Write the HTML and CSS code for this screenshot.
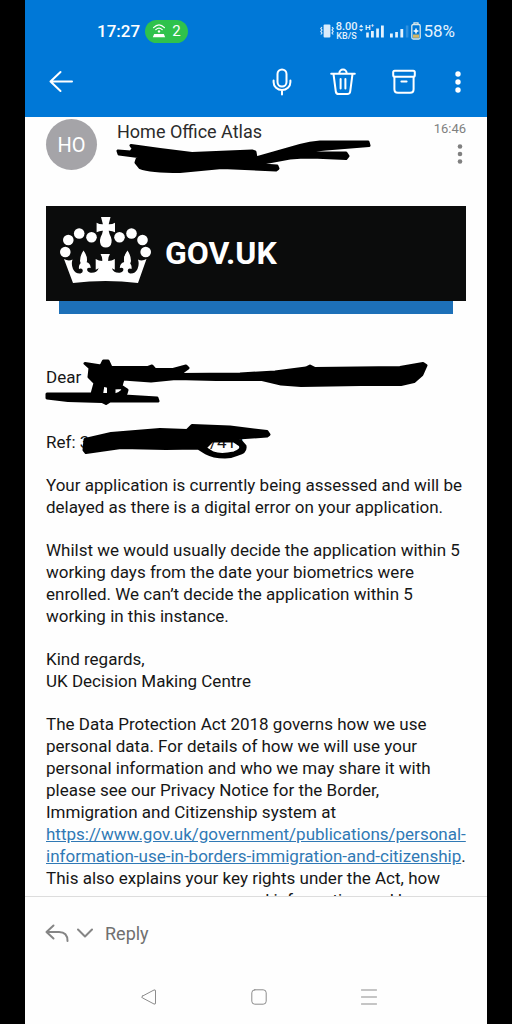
FILE: index.html
```html
<!DOCTYPE html>
<html lang="en">
<head>
<meta charset="utf-8">
<meta name="viewport" content="width=device-width, initial-scale=1">
<title>Home Office Atlas</title>
<link rel="stylesheet" href="styles.css">
</head>
<body>
<div class="screen">
  <header class="top">
    <div class="status">
      <span class="clock">17:27</span>
      <span class="hotspot">
        <svg width="14" height="16" viewBox="0 0 14 16" fill="none" stroke="#fff" stroke-width="1.3" stroke-linecap="round"><path d="M1.6 4.6Q7-.8 12.4 4.6M3.8 6.6Q7 3.6 10.2 6.6"/><circle cx="7" cy="8.4" r="1.2" fill="#fff" stroke="none"/><path d="M2.2 11h9.6l1.4 3.3H.8z" fill="#fff" stroke="none"/></svg>
        2
      </span>
      <div class="indicators">
        <svg width="14" height="16" viewBox="0 0 14 16" fill="none" stroke="#d9ebfb" stroke-width="1.2"><rect x="3.6" y="1.4" width="6.8" height="13" rx="1" fill="#d9ebfb" stroke="none"/><path d="M2 4 .8 5.5 2 7 .8 8.5 2 10 .8 11.5M12 4l1.2 1.5L12 7l1.2 1.5L12 10l1.2 1.5"/></svg>
        <span class="speed"><span class="rate">8.00</span><span class="unit">KB/S</span></span>
        <svg width="50" height="20" viewBox="0 0 50 20" fill="#e4f2fd"><path d="M0 6.2 2.2 3.4 4.4 6.2zM0 8.2h4.4L2.2 10.6z"/><text class="network" x="6" y="9">H⁺</text><path d="M7.200 11.500h2.600v5h-2.600zM12 10h2.800v6.500H12zM17.200 7.500h2.700v9h-2.700zM22 4.500h2.800v12H22zM31 12.500h2.800v4H31zM36.200 11h2.700v5.500h-2.700zM41.400 8h2.800v8.500h-2.800z"/><path d="M46.800 4.500h2.600v12h-2.600z" opacity=".2"/></svg>
        <svg width="10" height="18" viewBox="0 0 10 18" fill="none" stroke="#dbe9ea" stroke-width="1.3"><path d="M3 2.300V.8h4v1.500"/><rect x=".8" y="2.500" width="8.400" height="14.500" rx="1.500"/><path d="M2 12.500h6v3.300H2z" fill="#d6b663" stroke="none"/><path d="M5 6.500v5M2.600 9h4.800" stroke="#fff" stroke-width="1.500"/></svg>
        <span class="percent">58%</span>
      </div>
    </div>
    <nav class="toolbar" aria-label="Message actions">
      <button class="icon back" aria-label="Back"><svg width="24" height="26" viewBox="0 0 24 26"><path d="M23 12.500H1.500M11.500 3 1.500 12.500l10 9.500"/></svg></button>
      <button class="icon" aria-label="Dictate"><svg width="24" height="28" viewBox="0 0 24 28"><rect x="7.500" y="1.500" width="9" height="17" rx="4.500"/><path d="M3.600 12.500v1.700a8.400 7.800 0 0 0 16.800 0v-1.700M12 22v4.500"/></svg></button>
      <button class="icon" aria-label="Delete"><svg width="26" height="28" viewBox="0 0 26 28"><path d="M1.200 5.800h23.600M9.300 5.500a3.700 3.900 0 0 1 7.400 0M3.500 6l2.300 17.500q.3 2.500 2.800 2.500h8.800q2.500 0 2.800-2.500L22.500 6M10.600 11v9.500M15.400 11v9.500"/></svg></button>
      <button class="icon" aria-label="Archive"><svg width="24" height="28" viewBox="0 0 24 28"><rect x="1.200" y="2.700" width="21.600" height="6" rx="1.500"/><path d="M2.400 8.700v12.500q0 3.500 3.500 3.500h12.200q3.500 0 3.500-3.500V8.700M9.400 13.500h5.200"/></svg></button>
      <button class="icon more" aria-label="More options"><svg width="6" height="24" viewBox="0 0 6 24"><circle cx="3" cy="4" r="2.700"/><circle cx="3" cy="12" r="2.700"/><circle cx="3" cy="20" r="2.700"/></svg></button>
    </nav>
  </header>

  <main class="message">
    <div class="sender">
      <span class="avatar">HO</span>
      <h1 class="name">Home Office Atlas</h1>
      <div class="meta">
        <time>16:46</time>
        <button class="icon options" aria-label="Message options"><svg width="6" height="22" viewBox="0 0 6 22"><circle cx="3" cy="3.500" r="2.300"/><circle cx="3" cy="11" r="2.300"/><circle cx="3" cy="18.500" r="2.300"/></svg></button>
      </div>
    </div>

    <div class="banner">
      <svg class="crown" width="92" height="68" viewBox="0 0 92 68" fill="#fff">
        <circle cx="5.300" cy="36" r="5.300"/><circle cx="8.300" cy="24" r="5.300"/><circle cx="19.200" cy="17.500" r="5.300"/><circle cx="31.500" cy="21.200" r="5.300"/>
        <circle cx="59.500" cy="21.200" r="5.300"/><circle cx="71.500" cy="17.500" r="5.300"/><circle cx="82.500" cy="24" r="5.300"/><circle cx="85.700" cy="36" r="5.300"/>
        <path d="M41 1h9.500l-1.800 7.300q3.300.2 6.300-1.600v9.600q-3-1.800-6.300-1.600.5 3.300 2.200 6.300 1 2.500.6 5.500-.8 5-5.700 5t-5.700-5q-.4-3 .6-5.500 1.700-3 2.200-6.300-3.300-.2-6.300 1.600V6.700q3 1.800 6.300 1.600z"/>
        <path d="M4 43q4.500 2.500 8.500.5-1.500 5 .5 9.500 2.500 5 7.500 4.500 3-1 2-4-1.500-1.800-3.500-.5-.8-5 3.500-7-2.500-5 1.200-9.500 3.500 3.500 2.500 9.500 4.300 1 4.500 6-2.500-1-3.500.8-.5 3 3.500 4 6 .5 8-4.500l-3 1.500V43q3 2 6.500 2 .5-3.500-1.700-7h9.500q-2.200 3.500-1.700 7 3.500 0 6.500-2v10.800l-3-1.500q2 5 8 4.500 4-1 3.500-4-1-1.800-3.500-.8.200-5 4.500-6-1-6 2.500-9.500 3.700 4.500 1.200 9.500 4.300 2 3.500 7-2-1.300-3.500.5-1 3 2 4 5 .5 7.500-4.500 2-4.500.5-9.500 4 2 8.500-.5L78 67Q45.500 63 13 67z"/>
        <path d="M20 45q0-5.500 3.500-10.500Q27.500 40 27 45l-2 5h-3.500zM64 45q-.5-5 3.500-10.500Q71 39.500 71 45l-1.500 5H66z"/>
      </svg>
      <span class="brand">GOV.UK</span>
    </div>
    <div class="stripe"></div>

    <article class="body">
      <p>Dear<br>&nbsp;</p>
      <p>Ref: 3</p>
      <p>Your application is currently being assessed and will be delayed as there is a digital error on your application.</p>
      <p>Whilst we would usually decide the application within 5 working days from the date your biometrics were enrolled. We can’t decide the application within 5 working in this instance.</p>
      <p>Kind regards,<br>UK Decision Making Centre</p>
      <p>The Data Protection Act 2018 governs how we use personal data. For details of how we will use your personal information and who we may share it with please see our Privacy Notice for the Border, Immigration and Citizenship system at <a href="https://www.gov.uk/government/publications/personal-information-use-in-borders-immigration-and-citizenship">https://www.gov.uk/government/publications/personal-<wbr>information-use-in-borders-immigration-and-citizenship</a>. This also explains your key rights under the Act, how you can access your personal information and how</p>
    </article>

    <svg class="redaction" width="462" height="360" viewBox="25 117 462 360" aria-hidden="true">
      <text class="remnant" x="210" y="448">/411</text>
      <g fill="#000" fill-rule="evenodd" stroke="#000" stroke-linejoin="round" stroke-width="3">
        <path d="M131 145.500l29 4 32 4 60-2.500 3 1 1 6 44-12.500q10-3 20-3.500h48l1 3.500-43 3.500-30 3 50 1 2 3-2 2.500-34-1.500q-12 0-22 1l-35 6.500 22 1.500 1 2.500-2 1.500-54-2.500-42 4q-30 0-40-4l-4-5 2-6-19-2.500-1-3 13 1 2-3.500z"/>
        <path d="M85 363.500l16 2.500 2.500-5 4.500 0 3 6.500h37l4-1.500 3 3.500h18l13-3.500 2 2-9 6.500 61-.5 35-2 31-4 4-2 5 2.500 85-1 23-4 3 2-4 9-8 7-13 3h-40l-60 1-20-1.500-19-4.500h-46l-40-1-25 2.500-28-2-2 7 6 4-1 3.500-10 2 41 2.500 1 3-48 0-4 2.500-4-2-34-1-21-2.500v-4l45 0 3-11-6-6 1-9zM103 385l-1.500 9.500h7v-8zM114 388v7.500l5-2 4-3-1-3z"/>
        <path d="M85 439.500l26-6 49-4 27 1 5-5 38 1.500 37 4.500 2 3-2 1.500-29 2 7 8q1 6-7 8-7 3-13 3-12 0-19-4l-8-5-32 .5-45-1-35 5-2-2.500zM205 448l8 5q8 3 21 0 9-3 6-8l-6-4-22 0z"/>
      </g>
    </svg>
  </main>

  <footer class="bottom">
    <div class="reply">
      <button class="icon" aria-label="Reply"><svg width="24" height="18" viewBox="0 0 24 18"><path d="M8.500 1.500 1.500 8l7 6.500M1.500 8H14q8.500 0 8.500 9"/></svg></button>
      <button class="icon" aria-label="Reply options"><svg width="16" height="10" viewBox="0 0 16 10"><path d="m1 1.500 7 7 7-7"/></svg></button>
      <button class="reply-label">Reply</button>
    </div>
    <nav class="system" aria-label="System navigation">
      <button class="icon" aria-label="Back"><svg width="18" height="18" viewBox="0 0 18 18"><path d="M2.300 8.200 14 2q1.500-.6 1.500 1v12q0 1.600-1.500 1L2.300 9.800q-1.500-.8 0-1.600z"/></svg></button>
      <button class="icon" aria-label="Home"><svg width="18" height="18" viewBox="0 0 18 18"><rect x="1.800" y="1.800" width="14.400" height="14.400" rx="3"/></svg></button>
      <button class="icon" aria-label="Recent apps"><svg width="18" height="18" viewBox="0 0 18 18"><path d="M1.500 2h15M1.500 9h15M1.500 16h15"/></svg></button>
    </nav>
  </footer>
</div>
</body>
</html>
```

FILE: styles.css
```css
* { box-sizing: border-box; }

body {
  margin: 0;
  padding: 0 25px;
  background: #000;
  font-family: Roboto, "Liberation Sans", sans-serif;
}

svg { display: block; flex: none; }

button {
  padding: 0;
  border: 0;
  background: none;
  font: inherit;
  color: inherit;
}

.screen {
  display: flex;
  flex-direction: column;
  height: 100vh;
  background: #fefefe;
}

.top {
  flex: none;
  background: #0078d7;
  color: #fff;
}

.status {
  display: flex;
  align-items: center;
  padding: 16px 32px 0 72px;
  height: 46px;
}

.clock {
  font-size: 17px;
  font-weight: 500;
}

.hotspot {
  display: flex;
  align-items: center;
  gap: 6px;
  margin-left: 5px;
  padding: 0 7px;
  height: 23px;
  border-radius: 12px;
  background: #2fc24c;
  font-size: 15px;
}

.indicators {
  display: flex;
  align-items: center;
  gap: 2px;
  margin-left: auto;
  color: #e4f2fd;
}

.speed {
  display: flex;
  flex-direction: column;
  align-items: center;
  font-weight: 500;
}

.rate {
  font-size: 11px;
  line-height: 10px;
}

.unit {
  font-size: 9px;
  line-height: 9px;
}

.network {
  font-size: 8px;
  font-weight: 700;
}

.percent { font-size: 17px; }

.toolbar {
  display: flex;
  align-items: center;
  gap: 36px;
  height: 71px;
  padding: 0 26px 0 24px;
}

.icon svg {
  fill: none;
  stroke: currentColor;
  stroke-width: 2;
  stroke-linecap: round;
  stroke-linejoin: round;
}

.toolbar .back { margin-right: auto; }

.toolbar .more { margin-left: 3px; }

.more svg,
.options svg {
  fill: currentColor;
  stroke: none;
}

.message {
  position: relative;
  flex: 1;
  min-height: 0;
  overflow: hidden;
  padding: 0 21px;
}

.sender {
  display: flex;
  align-items: flex-start;
  height: 89px;
  padding-top: 2px;
}

.avatar {
  display: grid;
  place-items: center;
  width: 51px;
  height: 51px;
  border-radius: 50%;
  background: #a5a4a8;
  color: #fff;
  font-size: 20px;
}

.name {
  flex: 1;
  margin: 0 0 0 20px;
  padding-top: 1px;
  color: #2b2b2b;
  font-size: 18px;
  font-weight: 400;
  line-height: 24px;
}

.meta {
  display: flex;
  flex-direction: column;
  align-items: flex-end;
  gap: 4px;
  color: #808080;
  font-size: 13px;
  line-height: 20px;
}

.options { margin-right: 3px; }

.banner {
  display: flex;
  align-items: center;
  gap: 13px;
  height: 95px;
  padding-left: 14px;
  background: #0b0c0c;
}

.crown { margin-bottom: 8px; }

.brand {
  padding-bottom: 2px;
  color: #fff;
  font-size: 32px;
  font-weight: 700;
}

.stripe {
  height: 13px;
  margin: 0 13px;
  background: #1d70b8;
}

.body {
  padding-top: 52px;
  color: #161616;
  font-size: 17px;
  line-height: 22px;
}

.body p { margin: 0 0 21px; }

.body a { color: #3079b5; }

.redaction {
  position: absolute;
  top: 0;
  left: 0;
}

.remnant {
  fill: #161616;
  font-size: 17px;
}

.bottom {
  flex: none;
  border-top: 1px solid #ddd;
}

.reply {
  display: flex;
  align-items: center;
  gap: 8px;
  height: 72px;
  padding-left: 20px;
  color: #858585;
}

.reply-label {
  margin-left: 4px;
  color: #707070;
  font-size: 18px;
}

.system {
  display: flex;
  align-items: center;
  justify-content: center;
  gap: 92px;
  height: 55px;
  padding-left: 6px;
  color: #8c8c8c;
}

.system .icon svg { stroke-width: 1; }
```
